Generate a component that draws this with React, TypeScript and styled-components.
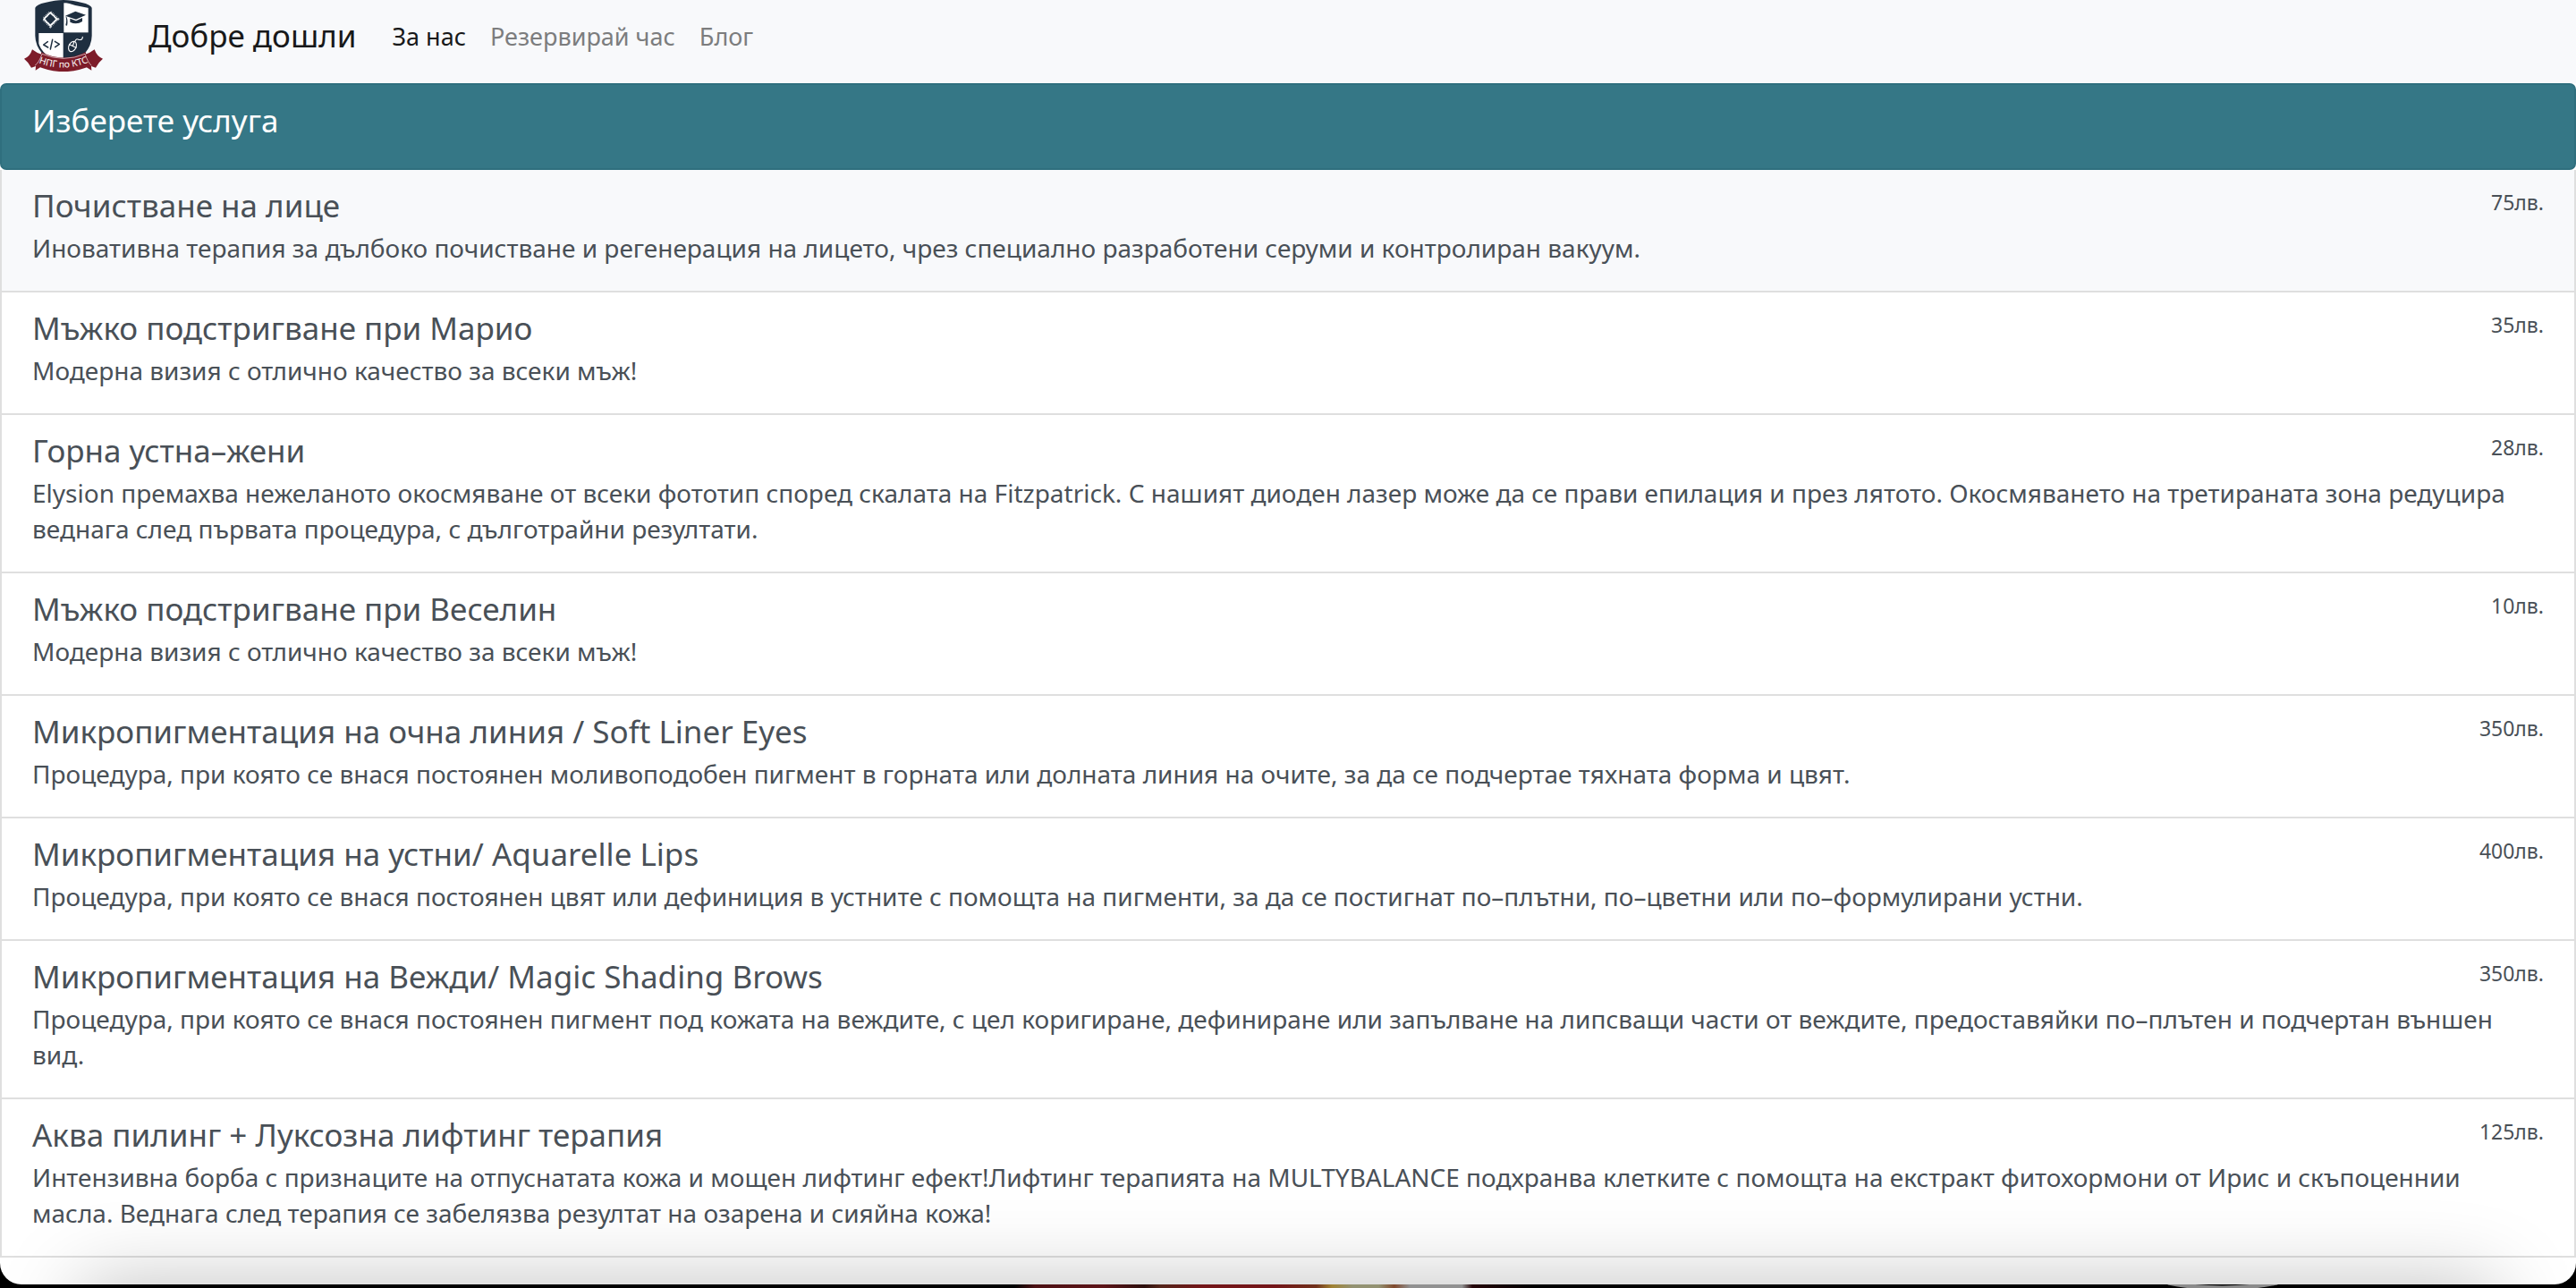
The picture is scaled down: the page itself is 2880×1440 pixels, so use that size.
import React from "react";
import styled, { createGlobalStyle, css } from "styled-components";

const GlobalStyle = createGlobalStyle`
  *, *::before, *::after { box-sizing: border-box; }
  body {
    margin: 0;
    background: #000;
    color: #495057;
    font-family: "Noto Sans", "Open Sans", sans-serif;
    font-size: 28px;
    line-height: 40px;
  }
`;

const Screen = styled.div`
  display: flex;
  flex-direction: column;
  min-height: 100vh;
`;

const Page = styled.div`
  position: relative;
  flex: 1;
  overflow: hidden;
  background: #fff;
  border-radius: 0 0 24px 24px;
`;

const DockShadow = styled.div`
  position: absolute;
  left: 90px;
  right: 90px;
  top: 100%;
  height: 100px;
  pointer-events: none;
  box-shadow: 0 0 90px rgba(0, 0, 0, 0.25);
`;

const Navbar = styled.nav`
  display: flex;
  align-items: center;
  padding: 0 27px 13px;
  background: #f8f9fb;
`;

const LogoLink = styled.a`
  display: flex;
  margin-right: 51px;
`;

const Brand = styled.a`
  margin-right: 40px;
  color: #18191a;
  font-size: 35px;
  text-decoration: none;
`;

const NavList = styled.ul`
  display: flex;
  gap: 27px;
  margin: 0;
  padding: 0;
  list-style: none;
`;

const NavLink = styled.a<{ $active?: boolean }>`
  color: ${(p) => (p.$active ? "#18191a" : "#7c7d7e")};
  font-size: 27px;
  text-decoration: none;
`;

const rowBox = css`
  padding: 20px 34px;
  border: 2px solid #dfdfdf;
`;

const ListHeader = styled.header`
  ${rowBox}
  padding-bottom: 33px;
  background: #357786;
  border-color: #2f6f7e;
  border-radius: 7px;
  color: #fff;
`;

const Heading = styled.h2`
  margin: 0;
  font-size: 35px;
  font-weight: 400;
  line-height: 40px;
`;

const Services = styled.ul`
  margin: 0;
  padding: 0;
  list-style: none;
`;

const ServiceLink = styled.a<{ $highlighted?: boolean }>`
  ${rowBox}
  display: block;
  border-top: 0;
  padding-bottom: 28px;
  background: ${(p) => (p.$highlighted ? "#f8f9fb" : "#fff")};
  color: inherit;
  text-decoration: none;
`;

const ServiceTop = styled.div`
  display: flex;
  justify-content: space-between;
  align-items: flex-start;
  margin-bottom: 7px;
`;

const Price = styled.small`
  font-size: 23px;
  line-height: 33px;
`;

const Description = styled.p`
  margin: 0;
`;

const Wallpaper = styled.svg`
  display: block;
  width: 100%;
  height: 4px;
`;

type Service = { name: string; price: string; text: string };

const services: Service[] = [
  { name: "Почистване на лице", price: "75лв.", text: "Иновативна терапия за дълбоко почистване и регенерация на лицето, чрез специално разработени серуми и контролиран вакуум." },
  { name: "Мъжко подстригване при Марио", price: "35лв.", text: "Модерна визия с отлично качество за всеки мъж!" },
  { name: "Горна устна–жени", price: "28лв.", text: "Elysion премахва нежеланото окосмяване от всеки фототип според скалата на Fitzpatrick. С нашият диоден лазер може да се прави епилация и през лятото. Окосмяването на третираната зона редуцира веднага след първата процедура, с дълготрайни резултати." },
  { name: "Мъжко подстригване при Веселин", price: "10лв.", text: "Модерна визия с отлично качество за всеки мъж!" },
  { name: "Микропигментация на очна линия / Soft Liner Eyes", price: "350лв.", text: "Процедура, при която се внася постоянен моливоподобен пигмент в горната или долната линия на очите, за да се подчертае тяхната форма и цвят." },
  { name: "Микропигментация на устни/ Aquarelle Lips", price: "400лв.", text: "Процедура, при която се внася постоянен цвят или дефиниция в устните с помощта на пигменти, за да се постигнат по–плътни, по–цветни или по–формулирани устни." },
  { name: "Микропигментация на Вежди/ Magic Shading Brows", price: "350лв.", text: "Процедура, при която се внася постоянен пигмент под кожата на веждите, с цел коригиране, дефиниране или запълване на липсващи части от веждите, предоставяйки по–плътен и подчертан външен вид." },
  { name: "Аква пилинг + Луксозна лифтинг терапия", price: "125лв.", text: "Интензивна борба с признаците на отпуснатата кожа и мощен лифтинг ефект!Лифтинг терапията на MULTYBALANCE подхранва клетките с помощта на екстракт фитохормони от Ирис и скъпоценнии масла. Веднага след терапия се забелязва резултат на озарена и сияйна кожа!" },
];

const SchoolLogo = () => (
  <svg width="88" height="80" viewBox="0 0 264 240" role="img" aria-label="НПГ по КТС">
    <defs>
      <clipPath id="shield">
        <path d="M43 28Q88 22 132 6Q176 22 221 28V116Q221 180 132 222Q43 180 43 116Z" />
      </clipPath>
      <path id="ribbonText" d="M48 211Q132 243 216 209" />
    </defs>
    <path d="M37 26Q42 15 70 9Q105 0 132 0Q160 0 194 9Q222 15 227 26V120Q226 186 132 228Q38 186 37 120Z" fill="#1f2f40" />
    <g clipPath="url(#shield)">
      <rect x="133" y="10" width="82" height="99" fill="#fff" />
      <rect x="49" y="111" width="82" height="99" fill="#fff" />
    </g>
    <g fill="none" stroke="#fff">
      <path d="M88 42l22 22-22 22-22-22z" strokeWidth="5" strokeLinejoin="round" />
      <path d="M88 42l22 22-22 22-22-22z" strokeWidth="13" strokeDasharray="2.5 3.5" opacity=".75" />
      <path d="M88 47l17 17-17 17-17-17z" fill="#1f2f40" stroke="none" />
    </g>
    <g fill="#1f2f40">
      <path d="M138 53L172 38L207 50L174 65Z" />
      <path d="M154 62L174 70L195 60V72Q176 85 154 74Z" />
      <path d="M142 56Q148 68 144 86L139 85Q144 68 139 55Z" />
    </g>
    <g fill="none" stroke="#1f2f40" strokeWidth="4.5" strokeLinecap="round" strokeLinejoin="round">
      <path d="M79 140L65 150L80 159M103 139L118 148L104 158M95 133L88 165" />
    </g>
    <g fill="none" stroke="#fff" strokeWidth="3.5" strokeLinecap="round">
      <ellipse cx="162" cy="156" rx="12" ry="18" transform="rotate(25 162 156)" />
      <path d="M152 149L174 160M168 140L163 154M171 138Q174 128 183 133Q196 136 196 124" />
    </g>
    <path d="M27 166Q42 178 60 183L56 224L38 236L39 222L24 227Q16 210 0 197Q20 190 27 166Z" fill="#7d1c29" />
    <path d="M236 166Q221 178 203 183L207 224L226 236L225 222L240 227Q248 210 264 197Q244 190 236 166Z" fill="#7d1c29" />
    <path d="M58 175Q132 212 206 175Q210 205 226 219Q132 262 38 219Q54 205 58 175Z" fill="#7d1c29" />
    <path d="M36 220Q50 210 60 181M226 220Q214 210 204 181M60 181Q132 211 204 181" fill="none" stroke="#f1e6e8" strokeWidth="2" />
    <text fill="#fff" fontFamily="Noto Sans, sans-serif" fontSize="31" textAnchor="middle">
      <textPath href="#ribbonText" startOffset="50%">НПГ по КТС</textPath>
    </text>
  </svg>
);

export default function App() {
  return (
    <>
      <GlobalStyle />
      <Screen>
        <Page>
          <Navbar>
            <LogoLink href="#"><SchoolLogo /></LogoLink>
            <Brand href="#">Добре дошли</Brand>
            <NavList>
              <li><NavLink href="#about" $active>За нас</NavLink></li>
              <li><NavLink href="#booking">Резервирай час</NavLink></li>
              <li><NavLink href="#blog">Блог</NavLink></li>
            </NavList>
          </Navbar>
          <main>
            <ListHeader><Heading>Изберете услуга</Heading></ListHeader>
            <Services>
              {services.map((s, i) => (
                <li key={s.name}>
                  <ServiceLink href="#booking" $highlighted={i === 0}>
                    <ServiceTop>
                      <Heading as="h3">{s.name}</Heading>
                      <Price>{s.price}</Price>
                    </ServiceTop>
                    <Description>{s.text}</Description>
                  </ServiceLink>
                </li>
              ))}
            </Services>
          </main>
          <DockShadow />
        </Page>
        <Wallpaper viewBox="0 0 2880 4" preserveAspectRatio="none" aria-hidden="true">
          <defs>
            <linearGradient id="glow" gradientUnits="userSpaceOnUse" x1="1134" x2="1716" y1="0" y2="0">
              <stop offset="0" stopColor="#000" />
              <stop offset=".04" stopColor="#4c1013" />
              <stop offset=".17" stopColor="#5e1418" />
              <stop offset=".25" stopColor="#2c0f0c" />
              <stop offset=".28" stopColor="#54251a" />
              <stop offset=".36" stopColor="#741518" />
              <stop offset=".5" stopColor="#741518" />
              <stop offset=".58" stopColor="#70301a" />
              <stop offset=".61" stopColor="#a08232" />
              <stop offset=".65" stopColor="#939272" />
              <stop offset=".7" stopColor="#939272" />
              <stop offset=".73" stopColor="#80492c" />
              <stop offset=".76" stopColor="#919191" />
              <stop offset=".86" stopColor="#919191" />
              <stop offset=".88" stopColor="#250508" />
              <stop offset="1" stopColor="#000" />
            </linearGradient>
          </defs>
          <rect x="1134" width="582" height="4" fill="url(#glow)" />
          <path d="M2424 -2Q2484 10 2546 -2" fill="none" stroke="#8b8b8b" strokeWidth="5" />
        </Wallpaper>
      </Screen>
    </>
  );
}
